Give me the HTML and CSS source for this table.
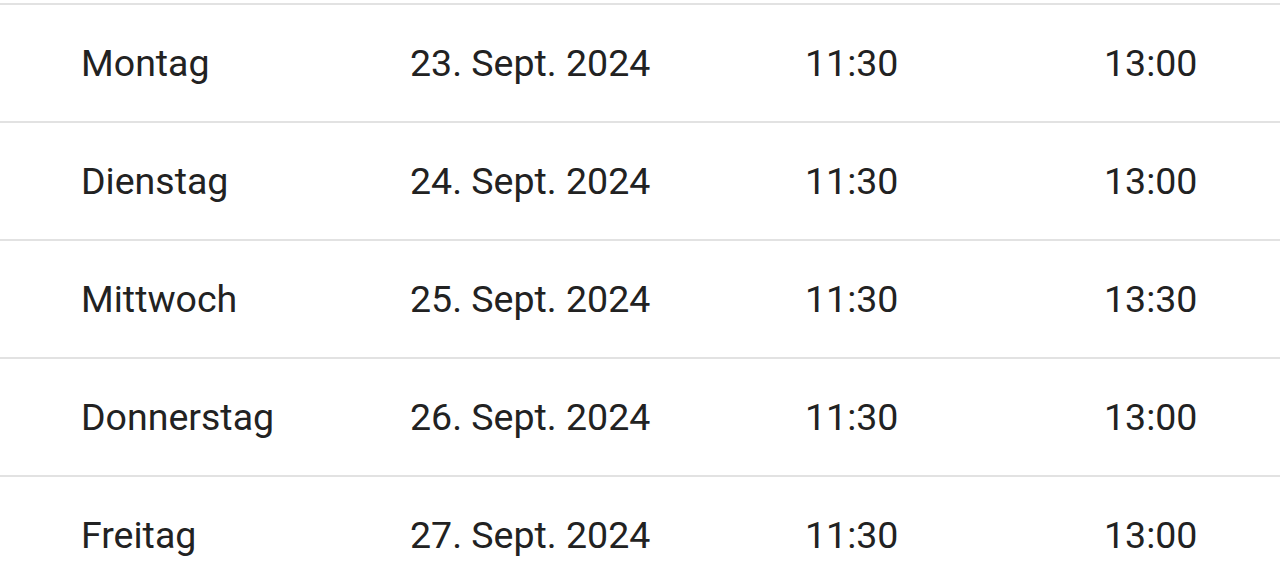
FILE: index.html
```html
<!DOCTYPE html>
<html lang="de">
<head>
<meta charset="utf-8">
<link rel="stylesheet" href="styles.css">
</head>
<body>
<div class="table">
  <div class="row"><span>Montag</span><span>23. Sept. 2024</span><span>11:30</span><span>13:00</span></div>
  <div class="row"><span>Dienstag</span><span>24. Sept. 2024</span><span>11:30</span><span>13:00</span></div>
  <div class="row"><span>Mittwoch</span><span>25. Sept. 2024</span><span>11:30</span><span>13:30</span></div>
  <div class="row"><span>Donnerstag</span><span>26. Sept. 2024</span><span>11:30</span><span>13:00</span></div>
  <div class="row"><span>Freitag</span><span>27. Sept. 2024</span><span>11:30</span><span>13:00</span></div>
</div>
</body>
</html>
```
FILE: styles.css
```css
html, body {
  margin: 0;
  padding: 0;
  background: #ffffff;
  overflow: hidden;
}
body {
  font-family: Roboto, "Liberation Sans", sans-serif;
  color: #222222;
}
.table {
  padding-top: 3px;
}
.row {
  display: grid;
  grid-template-columns: 329px 395px 299px 1fr;
  align-items: center;
  height: 116px;
  padding-left: 81px;
  border-top: 2px solid #e2e2e2;
  font-size: 37.5px;
}
```
